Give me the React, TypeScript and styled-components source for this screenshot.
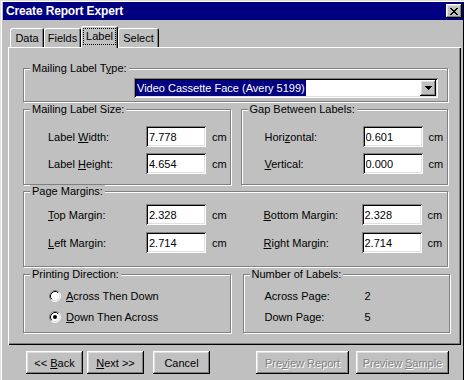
import React from "react"
import styled, { createGlobalStyle, css } from "styled-components"

const GlobalStyle = createGlobalStyle`
  html, body {
    margin: 0;
    padding: 0;
    overflow: hidden;
    background: #c0c0c0;
  }
  body {
    font-family: "Liberation Sans", Arial, sans-serif;
    font-size: 11px;
    color: #000;
  }
`

const raised = css`
  box-shadow: inset -1px -1px #000, inset 1px 1px #fff, inset -2px -2px #808080,
    inset 2px 2px #dfdfdf;
`

const sunken = css`
  box-shadow: inset 1px 1px #808080, inset -1px -1px #fff, inset 2px 2px #000,
    inset -2px -2px #dfdfdf;
`

const Window = styled.div`
  width: 464px;
  height: 380px;
  box-sizing: border-box;
  padding: 2px 1px 0 3px;
  background: #c0c0c0;
  box-shadow: inset 1px 1px #dfdfdf, inset 2px 2px #fff, inset -1px 0 #000;
  display: flex;
  flex-direction: column;
`

const TitleBar = styled.div`
  height: 18px;
  background: #000080;
  color: #fff;
  display: flex;
  align-items: center;
  justify-content: space-between;
  padding: 0 1px 0 3px;
`

const Title = styled.span`
  font-weight: bold;
  font-size: 12px;
  letter-spacing: -0.15px;
`

const CloseButton = styled.button`
  ${raised};
  width: 16px;
  height: 14px;
  border: none;
  padding: 0;
  background: #c0c0c0;
  display: flex;
  align-items: center;
  justify-content: center;
`

const TabStrip = styled.div`
  display: flex;
  align-items: flex-end;
  margin: 6px 0 0 7px;
  height: 21px;
`

const Tab = styled.div<{ $width: number; $active?: boolean }>`
  width: ${p => p.$width}px;
  height: 19px;
  box-sizing: border-box;
  display: flex;
  align-items: center;
  justify-content: center;
  padding-top: 1px;
  border-radius: 2px 2px 0 0;
  box-shadow: inset 1px 1px #fff, inset -1px 0 #000, inset -2px 0 #808080;
  ${p =>
    p.$active &&
    css`
      height: 22px;
      margin-bottom: -1px;
      padding-bottom: 2px;
      position: relative;
      z-index: 1;
      background: #c0c0c0;
    `}
`

const Focus = styled.span`
  outline: 1px dotted #000;
  padding: 1px 2px;
  line-height: 13px;
`

const Panel = styled.div`
  width: 453px;
  box-sizing: border-box;
  margin-left: 5px;
  padding: 15px 13px 12px 15px;
  box-shadow: inset 1px 1px #fff, inset -1px -1px #000, inset -2px -2px #808080;
  display: flex;
  flex-direction: column;
`

const Pair = styled.div<{ $gap?: number; $pull?: number; $top?: number }>`
  display: grid;
  grid-template-columns: 1fr 1fr;
  column-gap: ${p => p.$gap ?? 10}px;
  margin-right: ${p => -(p.$pull ?? 0)}px;
  margin-top: ${p => p.$top ?? 0}px;
`

const Group = styled.fieldset<{ $pad: string; $top?: number }>`
  margin: ${p => p.$top ?? 0}px 0 0 0;
  padding: ${p => p.$pad};
  min-width: 0;
  border: 1px solid #808080;
  box-shadow: inset 1px 1px #fff, 1px 1px #fff;
`

const Legend = styled.legend`
  margin-left: 6px;
  padding: 0 2px;
  line-height: 13px;
  background: #c0c0c0;
`

const Combo = styled.div`
  ${sunken};
  height: 20px;
  margin: 0 9px 0 110px;
  background: #fff;
  box-sizing: border-box;
  padding: 2px;
  display: flex;
  align-items: center;
  justify-content: space-between;
`

const Selected = styled.span`
  background: #000080;
  color: #fff;
  line-height: 16px;
  padding: 0 1px;
`

const DropButton = styled.div`
  ${raised};
  width: 16px;
  height: 16px;
  background: #c0c0c0;
  display: flex;
  align-items: center;
  justify-content: center;
`

const Rows = styled.div<{ $gap: number; $indent: number }>`
  display: flex;
  flex-direction: column;
  gap: ${p => p.$gap}px;
  padding-left: ${p => p.$indent}px;
`

const FieldRow = styled.div<{ $label?: number }>`
  display: grid;
  grid-template-columns: ${p => p.$label ?? 92}px 60px auto;
  column-gap: 6px;
  align-items: center;
  height: 21px;
`

const TextBox = styled.input`
  ${sunken};
  width: 60px;
  height: 21px;
  box-sizing: border-box;
  border: none;
  margin: 0;
  padding: 0 2px 0 3px;
  background: #fff;
  font: inherit;
  color: #000;
  outline: none;
`

const RadioRow = styled.label`
  display: flex;
  align-items: center;
  gap: 5px;
  height: 21px;
`

const ButtonRow = styled.div`
  display: flex;
  margin: 6px 0 0 23px;
`

const Button = styled.button<{ $width: number; $gap?: number; $disabled?: boolean }>`
  ${raised};
  width: ${p => p.$width}px;
  height: 23px;
  margin-right: ${p => p.$gap ?? 0}px;
  border: none;
  padding: 0;
  background: #c0c0c0;
  font: inherit;
  color: ${p => (p.$disabled ? "#808080" : "#000")};
  text-shadow: ${p => (p.$disabled ? "1px 1px #fff" : "none")};
`

const Spacer = styled.div`
  flex: 1;
`

const closeGlyph = (
  <svg width="8" height="7" viewBox="0 0 8 7" shapeRendering="crispEdges">
    <path
      d="M0 0h2v1H0zM6 0h2v1H6zM1 1h2v1H1zM5 1h2v1H5zM2 2h4v1H2zM3 3h2v1H3zM2 4h4v1H2zM1 5h2v1H1zM5 5h2v1H5zM0 6h2v1H0zM6 6h2v1H6z"
      fill="#000"
    />
  </svg>
)

const downArrow = (
  <svg width="7" height="4" viewBox="0 0 7 4" shapeRendering="crispEdges">
    <path d="M0 0h7v1H0zM1 1h5v1H1zM2 2h3v1H2zM3 3h1v1H3z" fill="#000" />
  </svg>
)

const Radio = ({ checked }: { checked?: boolean }) => (
  <svg width="12" height="12" viewBox="0 0 12 12">
    <circle cx="6" cy="6" r="5" fill="#fff" />
    <path d="M2.11 9.89 A5.5 5.5 0 0 1 9.89 2.11" stroke="#808080" fill="none" />
    <path d="M9.89 2.11 A5.5 5.5 0 0 1 2.11 9.89" stroke="#fff" fill="none" />
    <path d="M2.82 9.18 A4.5 4.5 0 0 1 9.18 2.82" stroke="#000" fill="none" />
    <path d="M9.18 2.82 A4.5 4.5 0 0 1 2.82 9.18" stroke="#dfdfdf" fill="none" />
    {checked && <circle cx="6" cy="6" r="2" fill="#000" />}
  </svg>
)

const Measure = ({ label, value }: { label: React.ReactNode; value: string }) => (
  <FieldRow>
    <span>{label}</span>
    <TextBox readOnly value={value} />
    <span>cm</span>
  </FieldRow>
)

export default function App() {
  return (
    <>
      <GlobalStyle />
      <Window>
        <TitleBar>
          <Title>Create Report Expert</Title>
          <CloseButton aria-label="Close">{closeGlyph}</CloseButton>
        </TitleBar>

        <TabStrip>
          <Tab $width={34}>Data</Tab>
          <Tab $width={37}>Fields</Tab>
          <Tab $width={37} $active>
            <Focus>Label</Focus>
          </Tab>
          <Tab $width={41}>Select</Tab>
        </TabStrip>

        <Panel>
          <Group $pad="3px 0 3px 0">
            <Legend>
              Mailing Label T<u>y</u>pe:
            </Legend>
            <Combo>
              <Selected>Video Cassette Face (Avery 5199)</Selected>
              <DropButton>{downArrow}</DropButton>
            </Combo>
          </Group>

          <Pair $top={1}>
            <Group $pad="10px 0 10px 0">
              <Legend>Mailing Label Size:</Legend>
              <Rows $gap={6} $indent={24}>
                <Measure
                  label={
                    <>
                      Label <u>W</u>idth:
                    </>
                  }
                  value="7.778"
                />
                <Measure
                  label={
                    <>
                      Label <u>H</u>eight:
                    </>
                  }
                  value="4.654"
                />
              </Rows>
            </Group>
            <Group $pad="10px 0 10px 0">
              <Legend>Gap Between Labels:</Legend>
              <Rows $gap={6} $indent={23}>
                <Measure
                  label={
                    <>
                      Hori<u>z</u>ontal:
                    </>
                  }
                  value="0.601"
                />
                <Measure
                  label={
                    <>
                      <u>V</u>ertical:
                    </>
                  }
                  value="0.000"
                />
              </Rows>
            </Group>
          </Pair>

          <Group $pad="6px 0 13px 0">
            <Legend>Page Margins:</Legend>
            <Pair>
              <Rows $gap={7} $indent={24}>
                <Measure
                  label={
                    <>
                      <u>T</u>op Margin:
                    </>
                  }
                  value="2.328"
                />
                <Measure
                  label={
                    <>
                      <u>L</u>eft Margin:
                    </>
                  }
                  value="2.714"
                />
              </Rows>
              <Rows $gap={7} $indent={23}>
                <Measure
                  label={
                    <>
                      <u>B</u>ottom Margin:
                    </>
                  }
                  value="2.328"
                />
                <Measure
                  label={
                    <>
                      <u>R</u>ight Margin:
                    </>
                  }
                  value="2.714"
                />
              </Rows>
            </Pair>
          </Group>

          <Pair $gap={12} $pull={2} $top={1}>
            <Group $pad="4px 0 5px 0">
              <Legend>Printing Direction:</Legend>
              <Rows $gap={0} $indent={25}>
                <RadioRow>
                  <Radio />
                  <span>
                    <u>A</u>cross Then Down
                  </span>
                </RadioRow>
                <RadioRow>
                  <Radio checked />
                  <span>
                    <u>D</u>own Then Across
                  </span>
                </RadioRow>
              </Rows>
            </Group>
            <Group $pad="4px 0 5px 0">
              <Legend>Number of Labels:</Legend>
              <Rows $gap={0} $indent={21}>
                <FieldRow $label={94}>
                  <span>Across Page:</span>
                  <span>2</span>
                </FieldRow>
                <FieldRow $label={94}>
                  <span>Down Page:</span>
                  <span>5</span>
                </FieldRow>
              </Rows>
            </Group>
          </Pair>
        </Panel>

        <ButtonRow>
          <Button $width={57} $gap={4}>
            &lt;&lt; <u>B</u>ack
          </Button>
          <Button $width={57} $gap={9}>
            <u>N</u>ext &gt;&gt;
          </Button>
          <Button $width={57}>Cancel</Button>
          <Spacer />
          <Button $width={93} $gap={7} $disabled>
            Pre<u>v</u>iew Report
          </Button>
          <Button $width={93} $gap={14} $disabled>
            Preview <u>S</u>ample
          </Button>
        </ButtonRow>
      </Window>
    </>
  )
}
